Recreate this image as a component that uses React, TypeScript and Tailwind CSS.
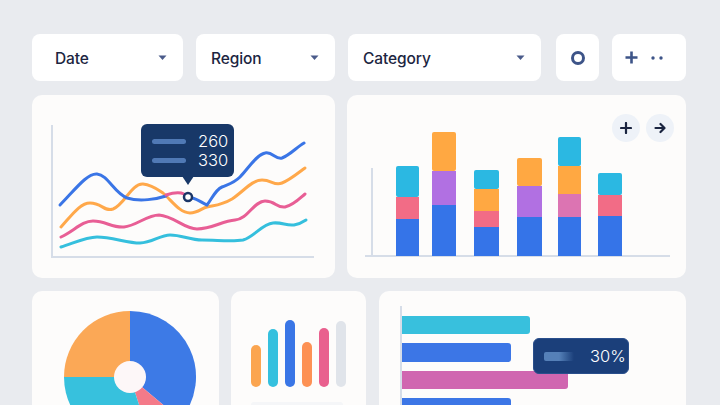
import React from "react";

const font = { fontFamily: "Inter, 'Open Sans', sans-serif" };

function Caret() {
  return (
    <svg width="9" height="6" viewBox="0 0 9 6">
      <path d="M0.5 0.5 L8.5 0.5 L4.5 5 Z" fill="#4a5b8a" />
    </svg>
  );
}

function Dropdown({ label, w, pl }: { label: string; w: string; pl: string }) {
  return (
    <div className={`${w} ${pl} h-full bg-white rounded-[8px] flex items-center justify-between pr-[16px]`}>
      <span className="mt-[3px] text-[15.5px] font-medium text-[#1c2541] tracking-[-0.1px]">{label}</span>
      <Caret />
    </div>
  );
}

function LineCard() {
  return (
    <div className="relative w-[303px] h-full bg-[#fdfcfb] rounded-[10px]">
      <svg width="303" height="183" viewBox="0 0 303 183" className="block">
        <path d="M20 30 L20 162 L282 162" fill="none" stroke="#d6dde8" strokeWidth="2" />
        <g fill="none" strokeWidth="3" strokeLinecap="round">
          <path d="M29,152 C42,148 54,142 65,142 C80,142 95,148 108,148 C120,148 128,140 138,140 C150,140 158,145 170,145 C185,145 200,147 211,145 C222,142 230,129 241,128 C250,127 254,131 262,130 C268,129 271,127 274,125" stroke="#35bfdd" />
          <path d="M29,142 C42,136 50,126 61,126 C74,126 80,133 92,132 C104,131 115,120 127,120 C142,121 152,134 165,134 C180,134 190,126 203,125 C216,124 222,106 233,106 C244,106 244,113 253,112 C262,110 268,103 273,99" stroke="#e85e95" />
          <path d="M29,132 C40,120 48,108 58,108 C70,108 72,117 81,114 C92,110 100,88 111,89 C120,90 125,94 131,98 C140,106 148,118 158,118 C166,118 170,113 175,112 C185,110 190,110 200,104 C212,96 220,85 230,85 C240,85 242,91 250,88 C258,85 266,78 273,73" stroke="#ffa84a" />
          <path d="M28,110 C42,96 55,78 65,79 C76,80 82,98 95,103 C108,107 125,104 134,101" stroke="#3a75e6" />
          <path d="M134,100 C140,98 148,97 152,99" stroke="#e85e95" />
          <path d="M160,103 C166,104 170,108 175,110 C180,104 183,95 190,92 C197,89 202,88 208,82 C216,74 224,60 233,58 C240,56 244,65 250,63 C258,60 265,52 272,48" stroke="#3a75e6" />
        </g>
        <circle cx="156" cy="102" r="4" fill="#ffffff" stroke="#1b3566" strokeWidth="2.5" />
        <path d="M150 81 L162 81 L156 90 Z" fill="#183868" />
      </svg>
      <div className="absolute left-[109px] top-[29px] w-[93px] h-[53px] bg-[#183868] rounded-[6px] flex flex-col justify-center gap-[1px] pl-[11px]">
        <div className="flex items-center gap-[12px]">
          <div className="w-[34px] h-[5px] rounded-full bg-[#5079b5]" />
          <span className="text-[16.5px] font-light text-white leading-[18px]">260</span>
        </div>
        <div className="flex items-center gap-[12px]">
          <div className="w-[34px] h-[5px] rounded-full bg-[#5079b5]" />
          <span className="text-[16.5px] font-light text-white leading-[18px]">330</span>
        </div>
      </div>
    </div>
  );
}

const C = {
  blue: "#3574e8",
  cyan: "#2bb8e2",
  red: "#f26c86",
  orange: "#ffa842",
  purple: "#b170e2",
  magenta: "#dc74b2",
};

const bars: { x: number; w: number; segs: [number, number, string][] }[] = [
  { x: 49, w: 23, segs: [[71, 102, C.cyan], [102, 124, C.red], [124, 161, C.blue]] },
  { x: 85, w: 24, segs: [[37, 76, C.orange], [76, 110, C.purple], [110, 161, C.blue]] },
  { x: 127, w: 25, segs: [[75, 94, C.cyan], [94, 116, C.orange], [116, 132, C.red], [132, 161, C.blue]] },
  { x: 170, w: 25, segs: [[63, 91, C.orange], [91, 122, C.purple], [122, 161, C.blue]] },
  { x: 211, w: 23, segs: [[42, 71, C.cyan], [71, 99, C.orange], [99, 122, C.magenta], [122, 161, C.blue]] },
  { x: 251, w: 24, segs: [[78, 100, C.cyan], [100, 121, C.red], [121, 161, C.blue]] },
];

function BarCard() {
  return (
    <div className="relative w-[339px] h-full bg-[#fdfcfb] rounded-[10px]">
      <svg width="339" height="183" viewBox="0 0 339 183" className="block">
        <path d="M25 73 L25 161 M18 161 L323 161" fill="none" stroke="#d6dde8" strokeWidth="2" />
        {bars.map((b, i) => (
          <g key={i}>
            {b.segs.map(([y1, y2, col], j) => (
              <rect key={j} x={b.x} y={y1} width={b.w} height={y2 - y1} fill={col} rx={j === 0 ? 2 : 0} />
            ))}
          </g>
        ))}
      </svg>
      <div className="absolute top-[19px] right-[12px] flex gap-[6px]">
        <div className="w-[28px] h-[28px] rounded-full bg-[#eef2f8] flex items-center justify-center">
          <svg width="12" height="12" viewBox="0 0 12 12">
            <path d="M6 1 V11 M1 6 H11" stroke="#1a2440" strokeWidth="2.2" strokeLinecap="round" />
          </svg>
        </div>
        <div className="w-[28px] h-[28px] rounded-full bg-[#eef2f8] flex items-center justify-center">
          <svg width="12" height="12" viewBox="0 0 12 12">
            <path d="M1.5 6 H10 M6.5 2 L10.5 6 L6.5 10" stroke="#1a2440" strokeWidth="2.2" fill="none" strokeLinecap="round" strokeLinejoin="round" />
          </svg>
        </div>
      </div>
    </div>
  );
}

function arc(cx: number, cy: number, r: number, a1: number, a2: number) {
  const rad = (a: number) => ((a - 90) * Math.PI) / 180;
  const x1 = cx + r * Math.cos(rad(a1));
  const y1 = cy + r * Math.sin(rad(a1));
  const x2 = cx + r * Math.cos(rad(a2));
  const y2 = cy + r * Math.sin(rad(a2));
  const large = a2 - a1 > 180 ? 1 : 0;
  return `M${cx},${cy} L${x1},${y1} A${r},${r} 0 ${large} 1 ${x2},${y2} Z`;
}

function PieCard() {
  return (
    <div className="w-[187px] h-full bg-[#fdfcfb] rounded-[10px]">
      <svg width="187" height="160" viewBox="0 0 187 160" className="block">
        <path d={arc(98, 86, 66, 0, 130)} fill="#3d7ae6" />
        <path d={arc(98, 86, 66, 130, 162)} fill="#f47a89" />
        <path d={arc(98, 86, 66, 162, 270)} fill="#37c1dd" />
        <path d={arc(98, 86, 66, 270, 360)} fill="#fba856" />
        <circle cx="98" cy="86" r="16" fill="#fdf7f8" />
      </svg>
    </div>
  );
}

const pills = [
  { h: 42, c: "bg-[#fba550]" },
  { h: 58, c: "bg-[#35c0de]" },
  { h: 67, c: "bg-[#3a76e6]" },
  { h: 45, c: "bg-[#fd9154]" },
  { h: 59, c: "bg-[#e9608e]" },
  { h: 66, c: "bg-[#e0e4ea]" },
];

function PillCard() {
  return (
    <div className="w-[135px] h-full bg-[#fdfcfb] rounded-[10px] pt-[29px] pl-[20px]">
      <div className="flex items-end gap-[7px] h-[67px]">
        {pills.map((p, i) => (
          <div key={i} className={`w-[10px] rounded-full ${p.c}`} style={{ height: p.h }} />
        ))}
      </div>
      <div className="mt-[15px] w-[92px] h-[6px] rounded-full bg-[#f5f6f8]" />
    </div>
  );
}

function HBarCard() {
  return (
    <div className="relative w-[307px] h-full bg-[#fdfcfb] rounded-[10px] pl-[21px] pt-[15px]">
      <div className="flex">
        <div className="w-[2px] h-[120px] bg-[#d6dde8]" />
        <div className="flex flex-col gap-[9px] pt-[10px]">
          <div className="w-[128px] h-[18px] bg-[#38c0dd] rounded-r-[3px]" />
          <div className="w-[109px] h-[19px] bg-[#3c76e6] rounded-r-[3px]" />
          <div className="w-[166px] h-[18px] bg-[#d066b0] rounded-r-[3px]" />
          <div className="w-[109px] h-[18px] bg-[#3c76e6] rounded-r-[3px]" />
        </div>
      </div>
      <div className="absolute left-[154px] top-[47px] w-[96px] h-[36px] bg-[#1b3f7a] border border-[#2a4f8c] rounded-[6px] flex items-center pl-[10px]">
        <div className="w-[30px] h-[9px] rounded-[2px] bg-gradient-to-r from-[#5580b8] via-[#5580b8] to-[#1b3f7a]" />
        <span className="ml-[16px] text-[16.5px] font-light text-white">30%</span>
      </div>
    </div>
  );
}

export default function App() {
  return (
    <div className="w-[720px] h-[405px] overflow-hidden bg-[#e9ebef] pl-[32px] pt-[34px]" style={font}>
      <div className="w-[654px] flex flex-col">
        <div className="h-[47px] flex">
          <Dropdown label="Date" w="w-[151px]" pl="pl-[23px]" />
          <div className="w-[13px]" />
          <Dropdown label="Region" w="w-[139px]" pl="pl-[15px]" />
          <div className="w-[13px]" />
          <Dropdown label="Category" w="w-[193px]" pl="pl-[15px]" />
          <div className="w-[15px]" />
          <div className="w-[43px] h-full bg-white rounded-[8px] flex items-center justify-center">
            <svg width="16" height="16" viewBox="0 0 16 16">
              <circle cx="8" cy="8" r="5.5" fill="none" stroke="#3d5488" strokeWidth="3" />
            </svg>
          </div>
          <div className="w-[13px]" />
          <div className="w-[74px] h-full bg-white rounded-[8px] flex items-center pl-[13px] gap-[13px]">
            <svg width="13" height="13" viewBox="0 0 13 13">
              <path d="M6.5 0.5 V12.5 M0.5 6.5 H12.5" stroke="#3d5488" strokeWidth="2.6" />
            </svg>
            <svg width="12" height="4" viewBox="0 0 12 4">
              <circle cx="2" cy="2" r="1.7" fill="#3d5488" />
              <circle cx="10" cy="2" r="1.7" fill="#3d5488" />
            </svg>
          </div>
        </div>
        <div className="h-[183px] mt-[14px] flex gap-[12px]">
          <LineCard />
          <BarCard />
        </div>
        <div className="h-[140px] mt-[13px] flex">
          <PieCard />
          <div className="w-[12px]" />
          <PillCard />
          <div className="w-[13px]" />
          <HBarCard />
        </div>
      </div>
    </div>
  );
}
